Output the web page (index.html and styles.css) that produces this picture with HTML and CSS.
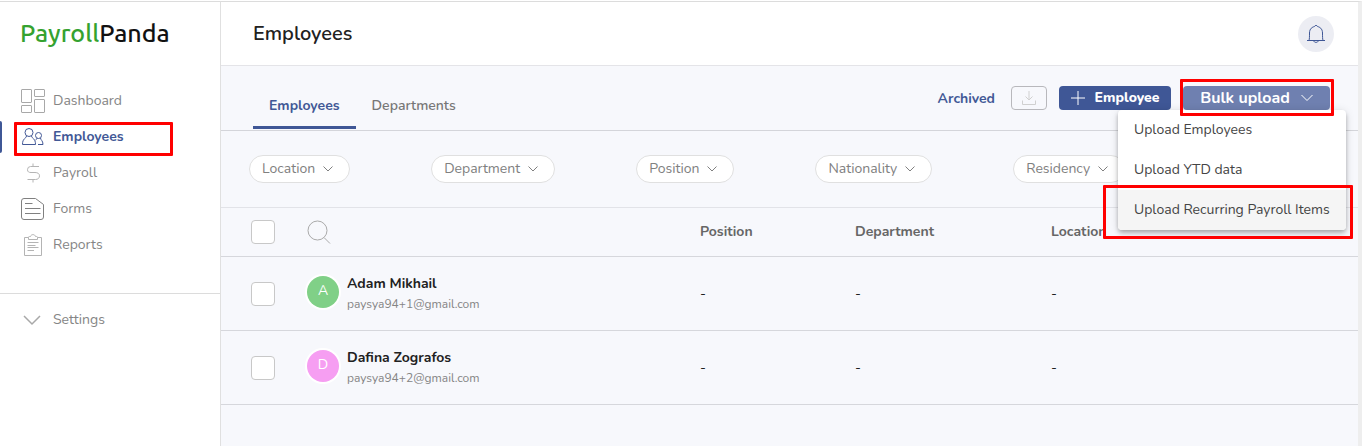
FILE: index.html
```
<!DOCTYPE html>
<html lang="en">
<head>
<meta charset="utf-8">
<meta name="viewport" content="width=device-width, initial-scale=1">
<title>Employees - PayrollPanda</title>
<link rel="stylesheet" href="styles.css">
</head>
<body>
<div class="app">
	<aside class="sidebar">
		<a class="logo" href="#"><span class="logo-green">Payroll</span>Panda</a>
		<nav>
			<ul class="nav-list">
				<li><a class="nav-link" href="#">
					<svg class="nav-icon" viewBox="0 0 24 24"><rect x="0.5" y="0.5" width="10" height="13" rx="0.5"/><rect x="13.5" y="0.5" width="10" height="7" rx="0.5"/><rect x="0.5" y="16.5" width="10" height="7" rx="0.5"/><rect x="13.5" y="10.5" width="10" height="13" rx="0.5"/></svg>
					Dashboard</a></li>
				<li class="active"><a class="nav-link highlight" href="#">
					<svg class="nav-icon" viewBox="0 0 24 24"><circle cx="8" cy="7.500" r="4"/><path d="M5.500 11C5 14 1.500 13 1.500 19.500H14.500C14.500 13 11 14 10.500 11"/><circle cx="17.500" cy="10.500" r="3"/><path d="M16 13C16 14 15.500 14.500 14.500 15M17 19.500H22C22 15.500 19.500 15 19.500 13"/></svg>
					Employees</a></li>
				<li><a class="nav-link" href="#">
					<svg class="nav-icon light" viewBox="0 0 24 24"><path d="M12 2.500V5.500M18 5.500H9.500A3.200 3.200 0 0 0 6.500 8.700C6.500 11 8 11.500 10 11.500H14C16.500 11.500 18.500 12.500 18.500 14.800C18.500 17 17 18.500 14.500 18.500H6.500M12 18.500V21.500"/></svg>
					Payroll</a></li>
				<li><a class="nav-link" href="#">
					<svg class="nav-icon dark" viewBox="0 0 24 24"><path d="M3 1.500H14.500L22.500 7.500V20A2.500 2.500 0 0 1 20 22.500H3A2.500 2.500 0 0 1 0.500 20V4A2.500 2.500 0 0 1 3 1.500ZM4 6.500H11.500M4 11.500H19.500M4 16.500H19.500"/></svg>
					Forms</a></li>
				<li><a class="nav-link" href="#">
					<svg class="nav-icon light" viewBox="0 0 24 24"><path d="M7.500 4.500H3.500V22.500H20.500V4.500H16.500M7.500 6.500V4.500A1 1 0 0 1 8.500 3.500H9.500C10 1 14 1 14.500 3.500H15.500A1 1 0 0 1 16.500 4.500V6.500ZM6.500 9.500H17.500M6.500 12.500H14.500M6.500 14.500H17.500M6.500 17.500H13"/></svg>
					Reports</a></li>
			</ul>
			<ul class="nav-list settings">
				<li><a class="nav-link" href="#">
					<svg class="nav-icon thick" viewBox="0 0 24 24"><path d="M3 8L11 16L19 8"/></svg>
					Settings</a></li>
			</ul>
		</nav>
	</aside>
	<main class="content">
		<header class="page-header">
			<h1>Employees</h1>
			<button class="btn-bell" type="button" aria-label="Notifications">
				<svg width="20" height="20" viewBox="0 0 20 20"><path d="M1 16.500H19M3 16.500C3.500 15 3.500 12 3.500 9C3.500 4.500 6.500 3 8.500 2.500C9 1 11 1 11.500 2.500C13.500 3 16.500 4.500 16.500 9C16.500 12 16.500 15 17 16.500M7.500 16.500C8 19 12 19 12.500 16.500"/></svg>
			</button>
		</header>
		<section class="toolbar">
			<div class="tabs">
				<a class="tab tab-active" href="#">Employees</a>
				<a class="tab" href="#">Departments</a>
			</div>
			<div class="actions">
				<a class="archived" href="#">Archived</a>
				<button class="btn btn-download" type="button" aria-label="Download">
					<svg width="16" height="16" viewBox="0 0 16 16"><path d="M8 1V10M4.500 6.500L8 10L11.500 6.500M1.500 10.500V14.500H14.500V10.500"/></svg>
				</button>
				<button class="btn btn-add" type="button">
					<svg width="14" height="14" viewBox="0 0 14 14"><path d="M7 0V14M0 7H14"/></svg>
					Employee
				</button>
				<div class="bulk highlight">
					<button class="btn btn-bulk" type="button" aria-haspopup="menu" aria-expanded="true">
						Bulk upload
						<svg width="12" height="8" viewBox="0 0 12 8"><path d="M0.500 1L6 6.500L11.500 1"/></svg>
					</button>
					<div class="menu" role="menu">
						<button class="menu-item" type="button" role="menuitem">Upload Employees</button>
						<button class="menu-item" type="button" role="menuitem">Upload YTD data</button>
						<button class="menu-item menu-hover highlight" type="button" role="menuitem">Upload Recurring Payroll Items</button>
					</div>
				</div>
			</div>
		</section>
		<section class="filters">
			<button class="filter" type="button">Location <svg width="10" height="6" viewBox="0 0 10 6"><path d="M0.500 0.500L5 5L9.500 0.500"/></svg></button>
			<button class="filter" type="button">Department <svg width="10" height="6" viewBox="0 0 10 6"><path d="M0.500 0.500L5 5L9.500 0.500"/></svg></button>
			<button class="filter" type="button">Position <svg width="10" height="6" viewBox="0 0 10 6"><path d="M0.500 0.500L5 5L9.500 0.500"/></svg></button>
			<button class="filter" type="button">Nationality <svg width="10" height="6" viewBox="0 0 10 6"><path d="M0.500 0.500L5 5L9.500 0.500"/></svg></button>
			<button class="filter" type="button">Residency <svg width="10" height="6" viewBox="0 0 10 6"><path d="M0.500 0.500L5 5L9.500 0.500"/></svg></button>
		</section>
		<table class="employees">
			<thead>
				<tr>
					<th class="col-check"><input class="check" type="checkbox" aria-label="Select all"></th>
					<th class="col-name">
						<button class="btn-search" type="button" aria-label="Search">
							<svg width="24" height="24" viewBox="0 0 24 24"><circle cx="10.500" cy="10.500" r="9.500"/><path d="M17 17.500L23 23.500"/></svg>
						</button>
					</th>
					<th class="col-position">Position</th>
					<th class="col-department">Department</th>
					<th class="col-location">Location</th>
				</tr>
			</thead>
			<tbody>
				<tr>
					<td><input class="check" type="checkbox" aria-label="Select Adam Mikhail"></td>
					<td>
						<div class="person">
							<span class="avatar green">A</span>
							<div>
								<div class="name">Adam Mikhail</div>
								<div class="email">paysya94+1@gmail.com</div>
							</div>
						</div>
					</td>
					<td>-</td>
					<td>-</td>
					<td>-</td>
				</tr>
				<tr>
					<td><input class="check" type="checkbox" aria-label="Select Dafina Zografos"></td>
					<td>
						<div class="person">
							<span class="avatar pink">D</span>
							<div>
								<div class="name">Dafina Zografos</div>
								<div class="email">paysya94+2@gmail.com</div>
							</div>
						</div>
					</td>
					<td>-</td>
					<td>-</td>
					<td>-</td>
				</tr>
			</tbody>
		</table>
	</main>
</div>
</body>
</html>
```
FILE: styles.css
```
* {
	box-sizing: border-box;
}
body {
	margin: 0;
	font-family: Nunito, "Noto Sans", sans-serif;
	font-size: 14px;
	line-height: 20px;
	color: #212121;
	background-color: #fff;
}
button {
	font: inherit;
	padding: 0;
	cursor: pointer;
}
a {
	text-decoration: none;
}
svg {
	fill: none;
	stroke: currentColor;
	flex: none;
}
.app {
	display: flex;
	min-height: 100vh;
	padding-top: 1px;
}
/* red call-out frame around an element */
.highlight {
	position: relative;
}
.highlight::after {
	content: "";
	position: absolute;
	border: 3px solid #f00;
	border-radius: 1px;
	pointer-events: none;
	z-index: 3;
}

/* sidebar */
.sidebar {
	flex: none;
	width: 221px;
	border-top: 1px solid #dcdcdc;
	border-right: 1px solid #e0e0e0;
}
.logo {
	display: block;
	margin: 16px 0 35px 20px;
	font-family: Ubuntu, "Noto Sans", sans-serif;
	font-size: 25px;
	font-weight: 500;
	line-height: 30px;
	color: #111;
}
.logo-green {
	color: #35a22f;
}
.nav-list {
	list-style: none;
	margin: 0;
	padding: 0;
}
.nav-list li {
	position: relative;
	padding: 0 47px 0 14px;
}
.nav-list .active::before {
	content: "";
	position: absolute;
	left: 0;
	top: 2px;
	width: 2px;
	height: 32px;
	border-radius: 0 4px 4px 0;
	background-color: #3f5796;
}
.nav-link {
	display: flex;
	align-items: center;
	gap: 8px;
	height: 36px;
	padding-left: 7px;
	color: #858585;
}
.nav-icon {
	width: 24px;
	height: 24px;
	color: #a8a8a8;
}
.nav-icon.light {
	color: #b4b4b4;
}
.nav-icon.dark {
	color: #808080;
}
.nav-icon.thick {
	stroke-width: 1.5;
}
.active .nav-link,
.active .nav-icon {
	color: #425896;
	font-weight: 700;
}
.nav-link.highlight::after {
	inset: 3px 0 -1px;
}
.settings {
	margin-top: 30px;
	padding-top: 8px;
	border-top: 1px solid #dcdcdc;
}

/* content */
.content {
	flex: 1;
	min-width: 0;
	border-top: 1px solid #dcdcdc;
	border-right: 4px solid #eee;
	background-color: #f7f8fc;
}
.page-header {
	display: flex;
	justify-content: space-between;
	align-items: center;
	height: 64px;
	padding: 0 24px 0 32px;
	border-bottom: 1px solid #e4e4e8;
	background-color: #fff;
}
h1 {
	margin: 0;
	font-size: 20px;
	font-weight: 600;
	line-height: 24px;
}
.btn-bell {
	display: flex;
	justify-content: center;
	align-items: center;
	width: 36px;
	height: 36px;
	border: 0;
	border-radius: 50%;
	color: #3f5796;
	background-color: #ecedf3;
}
.toolbar {
	display: flex;
	justify-content: space-between;
	height: 65px;
	padding: 0 28px 0 32px;
	border-bottom: 1px solid #d4d5da;
}
.tabs {
	display: flex;
	align-items: flex-end;
}
.tab {
	height: 34px;
	padding: 0 16px;
	line-height: 22px;
	font-weight: 600;
	color: #777;
	border-bottom: 3px solid transparent;
	margin-bottom: 1px;
}
.tab-active {
	font-weight: 700;
	color: #425896;
	border-color: #3f5796;
}
.actions {
	display: flex;
	align-items: flex-start;
	gap: 12px;
	margin-top: 20px;
}
.archived {
	margin-right: 4px;
	line-height: 25px;
	font-weight: 700;
	color: #425896;
}
.btn {
	display: flex;
	justify-content: center;
	align-items: center;
	height: 24px;
	border: 0;
	border-radius: 4px;
	color: #fff;
	background-color: #3f5796;
	font-weight: 800;
}
.btn-download {
	width: 36px;
	border: 1px solid #b8b8bc;
	color: #d0d0d0;
	background-color: transparent;
}
.btn-add {
	gap: 10px;
	width: 112px;
}
.bulk::after {
	inset: -7px -4px -6px -3px;
}
.btn-bulk {
	gap: 11px;
	width: 147px;
	font-size: 16px;
	font-weight: 700;
	background-color: #6f80b0;
}
.menu {
	position: absolute;
	top: 24px;
	right: -16px;
	z-index: 2;
	width: 228px;
	border-radius: 4px;
	background-color: #fff;
	box-shadow: 0 2px 4px -1px rgba(0, 0, 0, .2), 0 4px 5px rgba(0, 0, 0, .14), 0 1px 10px rgba(0, 0, 0, .12);
}
.menu-item {
	display: block;
	width: 100%;
	height: 40px;
	padding: 0 16px;
	border: 0;
	text-align: left;
	white-space: nowrap;
	color: #444;
	background-color: transparent;
}
.menu-hover {
	border-radius: 0 0 4px 4px;
	background-color: #f5f5f5;
}
.menu-hover::after {
	inset: -5px -7px -9px -15px;
}
.filters {
	display: flex;
	gap: 81px;
	padding: 24px 28px;
	border-bottom: 1px solid #e2e3e8;
}
.filter {
	display: flex;
	align-items: center;
	gap: 8px;
	height: 28px;
	padding: 0 16px 0 12px;
	border: 1px solid #e0e0e0;
	border-radius: 14px;
	color: #808080;
	background-color: #fff;
}

/* employees table */
.employees {
	width: 100%;
	border-spacing: 0;
	table-layout: fixed;
}
.employees th,
.employees td {
	height: 74px;
	padding: 0;
	text-align: left;
	border-bottom: 1px solid #d6d7dc;
}
.employees th {
	height: 49px;
	font-weight: 700;
	color: #666;
}
.col-check {
	width: 86px;
}
.col-position {
	width: 155px;
}
.col-department {
	width: 196px;
}
.col-location {
	width: 307px;
}
.check {
	appearance: none;
	display: block;
	width: 24px;
	height: 24px;
	margin: 0 0 0 30px;
	border: 1px solid #c8c8c8;
	border-radius: 4px;
	background-color: #fff;
}
.btn-search {
	display: block;
	border: 0;
	color: #aaa;
	background-color: transparent;
}
.btn-search svg {
	display: block;
}
.person {
	display: flex;
	align-items: flex-start;
	gap: 8px;
}
.avatar {
	width: 32px;
	height: 32px;
	margin-top: 2px;
	border-radius: 50%;
	box-shadow: 0 0 0 2px #fff;
	line-height: 30px;
	text-align: center;
	color: #fff;
}
.green {
	background-color: #80d087;
}
.pink {
	background-color: #f69ef2;
}
.name {
	font-weight: 700;
}
.email {
	font-size: 12px;
	color: #858585;
}
```
